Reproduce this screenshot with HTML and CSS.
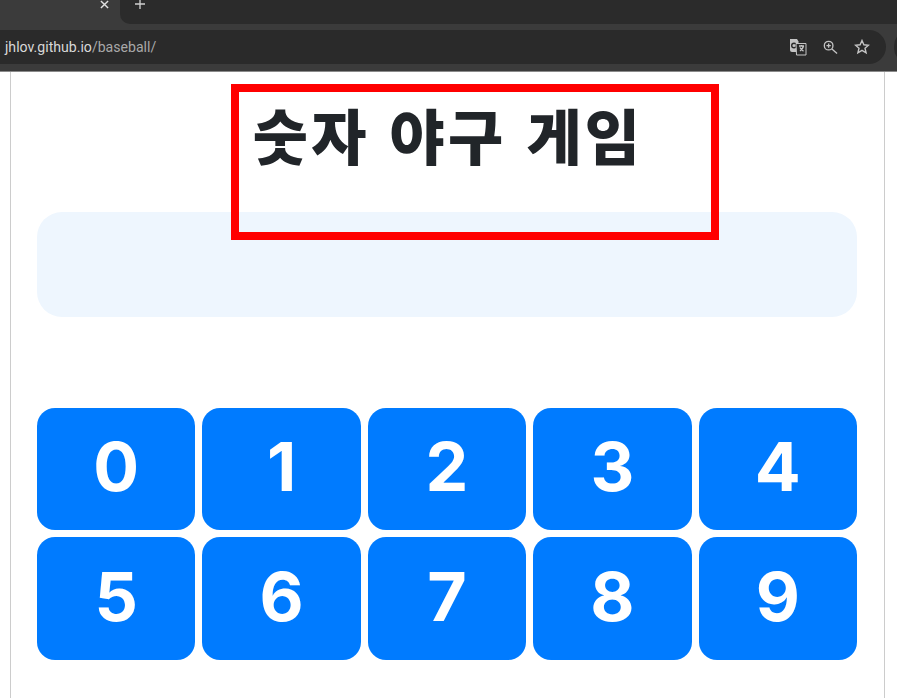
FILE: index.html
```html
<!DOCTYPE html>
<html lang="ko">
<head>
    <meta charset="UTF-8">
    <meta name="viewport" content="width=device-width, initial-scale=1.0">
    <title>숫자 야구 게임</title>
    <link rel="stylesheet" href="styles.css">
</head>
<body>
    <div class="browser">
        <div class="browser__tabs">
            <div class="browser__tab">
                <svg class="browser__close" viewBox="0 0 10 10"><path d="M1 1l8 8M9 1l-8 8"/></svg>
            </div>
            <div class="browser__strip">
                <svg class="browser__plus" viewBox="0 0 12 12"><path d="M6 0v12M0 6h12"/></svg>
            </div>
        </div>
        <div class="browser__toolbar">
            <div class="browser__omnibox">
                <span class="browser__url">jhlov.github.io<span class="browser__path">/baseball/</span></span>
                <div class="browser__icons">
                    <svg class="browser__icon" viewBox="0 0 18 18">
                        <path class="icon-fill" d="M1 1h7l1.500 2.500V14H3a2 2 0 0 1-2-2z"/>
                        <circle class="icon-dark" cx="5" cy="7.500" r="2.300"/>
                        <path class="icon-box" d="M7 5.500h10v11.500H7.500z"/>
                        <path class="icon-line" d="M10 8h5M12.500 7v1M14.500 8c-.5 2.500-2 4-3.500 5M11 9.500c.7 1.500 2 3 3.500 3.500"/>
                    </svg>
                    <svg class="browser__icon browser__icon--zoom" viewBox="0 0 16 16">
                        <circle class="icon-line" cx="6" cy="6" r="4.600"/>
                        <path class="icon-line" d="M9.500 9.500l5.500 5"/>
                        <path class="icon-line" d="M6 3.700v4.600M3.700 6h4.600"/>
                    </svg>
                    <svg class="browser__icon browser__icon--star" viewBox="0 0 16 16">
                        <path class="icon-line" d="M8 1.500l1.900 4.300 4.600.4-3.500 3 1.100 4.600L8 11.400l-4.100 2.400L5 9.200l-3.500-3 4.600-.4z"/>
                    </svg>
                </div>
            </div>
            <div class="browser__profile"></div>
        </div>
    </div>

    <div class="page">
        <div class="page__header">
            <h1 class="page__title">숫자 야구 게임</h1>
            <div class="page__highlight"></div>
        </div>
        <div class="message"></div>
        <div class="keypad">
            <button class="keypad__key">0</button>
            <button class="keypad__key">1</button>
            <button class="keypad__key">2</button>
            <button class="keypad__key">3</button>
            <button class="keypad__key">4</button>
            <button class="keypad__key">5</button>
            <button class="keypad__key">6</button>
            <button class="keypad__key">7</button>
            <button class="keypad__key">8</button>
            <button class="keypad__key">9</button>
        </div>
    </div>
</body>
</html>
```

FILE: styles.css
```css
/* Global Styles */
html, body {
    margin: 0;
    padding: 0;
    height: 100%;
    overflow: hidden;
    background: #fff;
    font-family: Roboto, Arial, sans-serif;
}

/* Browser chrome */
.browser {
    height: 71px;
    background: #3b3b3b;
    border-bottom: 1px solid #8a8a8a;
}

.browser__tabs {
    display: flex;
    height: 24px;
    overflow: hidden;
}

.browser__tab {
    width: 120px;
    background: #3b3b3b;
    display: flex;
    justify-content: flex-end;
}

.browser__strip {
    flex: 1;
    background: #2b2b2b;
    border-bottom-left-radius: 10px;
    padding-left: 15px;
}

.browser__close {
    width: 9px;
    height: 9px;
    margin: 0 11px 0 0;
    fill: none;
    stroke: #e0e0e0;
    stroke-width: 1.6;
}

.browser__plus {
    display: block;
    width: 10px;
    height: 10px;
    margin-top: -1px;
    fill: none;
    stroke: #d0d0d0;
    stroke-width: 1.6;
}

.browser__toolbar {
    display: flex;
    align-items: flex-start;
    height: 47px;
    padding-top: 6px;
    box-sizing: border-box;
}

.browser__omnibox {
    display: flex;
    flex-shrink: 0;
    align-items: center;
    justify-content: space-between;
    width: 886px;
    height: 34px;
    box-sizing: border-box;
    padding: 0 16px 0 5px;
    background: #2a2a2a;
    border-radius: 0 17px 17px 0;
}

.browser__url {
    font-size: 14.100px;
    color: #d8d8d8;
}

.browser__path {
    color: #a8a8a8;
}

.browser__icons {
    display: flex;
    align-items: center;
    gap: 16px;
}

.browser__icon {
    width: 18px;
    height: 18px;
    fill: none;
}

.browser__icon--zoom {
    width: 15px;
    height: 15px;
}

.browser__icon--star {
    width: 16px;
    height: 16px;
}

.icon-fill {
    fill: #c4c4c4;
}

.icon-dark {
    fill: none;
    stroke: #2a2a2a;
    stroke-width: 1.4;
}

.icon-box {
    fill: #2a2a2a;
    stroke: #c4c4c4;
    stroke-width: 1;
}

.icon-line {
    fill: none;
    stroke: #c4c4c4;
    stroke-width: 1.4;
}

.browser__profile {
    flex-shrink: 0;
    width: 16px;
    height: 34px;
    margin-left: 8px;
    background: #2a2a2a;
    border-radius: 17px 0 0 17px;
}

/* Page */
.page {
    width: 875px;
    height: 627px;
    margin-left: 10px;
    box-sizing: border-box;
    padding: 0 27px 0 26px;
    border-left: 1px solid #ccc;
    border-right: 1px solid #ccc;
}

.page__header {
    position: relative;
    height: 140px;
}

.page__title {
    margin: 0;
    padding: 19px 0 0 2px;
    font-family: "Noto Sans CJK KR", "Noto Sans", sans-serif;
    font-size: 60px;
    font-weight: 900;
    line-height: 86px;
    letter-spacing: 3.200px;
    color: #212529;
    text-align: center;
}

/* red marker drawn over the screenshot */
.page__highlight {
    position: absolute;
    left: 194px;
    top: 12px;
    width: 488px;
    height: 156px;
    box-sizing: border-box;
    border: 8px solid #f00;
    z-index: 1;
}

.message {
    height: 105px;
    background: #eef6fe;
    border-radius: 25px;
}

.keypad {
    display: grid;
    grid-template-columns: repeat(5, 1fr);
    gap: 7px;
    margin-top: 91px;
}

.keypad__key {
    height: 122.400px;
    padding: 0 0 6px;
    border: 0;
    border-radius: 18px;
    background: #007bff;
    color: #fff;
    font-family: Inter, Arial, sans-serif;
    font-size: 68px;
    font-weight: 700;
}
```
